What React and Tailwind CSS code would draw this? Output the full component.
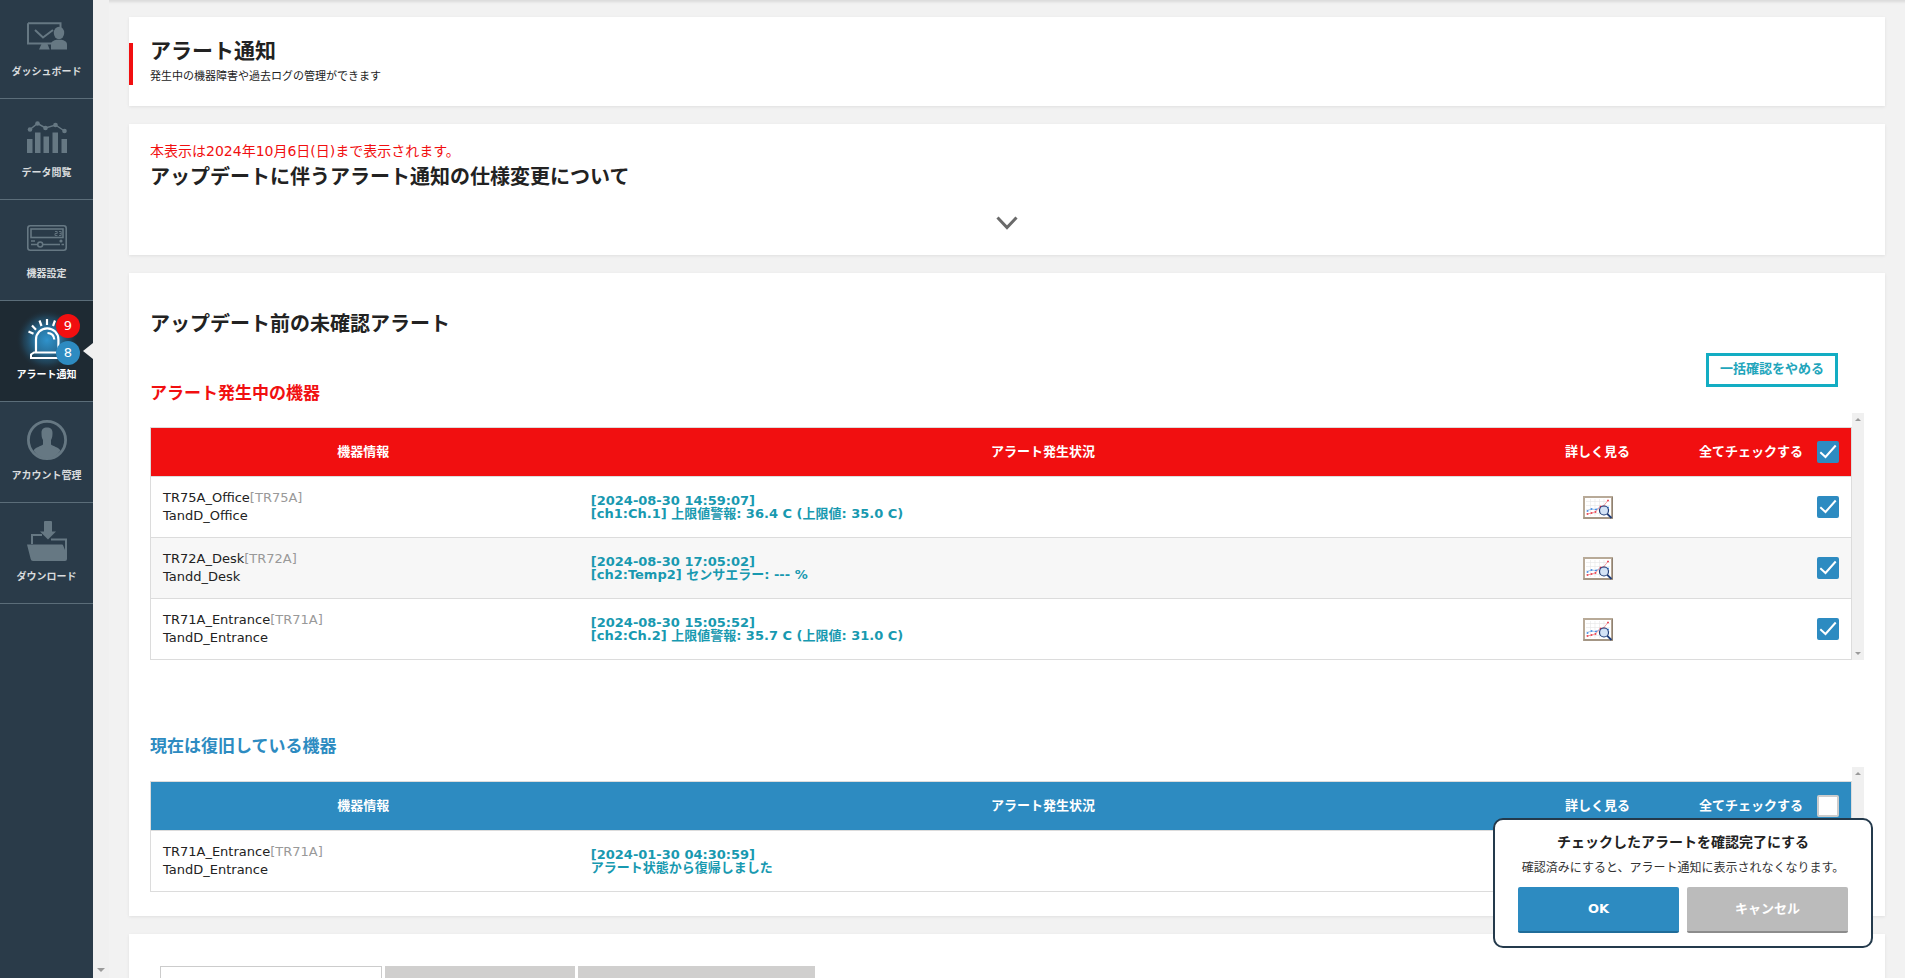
import React, { useState } from "react";

const ICON = "#667883";

function DashboardIcon() {
  return (
    <svg width="40" height="28" viewBox="0 0 40 28" fill="none" aria-hidden="true">
      <path d="M1 1.200h32.500v5M1 1.200v20.300h24" stroke={ICON} strokeWidth="2" />
      <path d="M8 8l8 7.500L26 8" stroke={ICON} strokeWidth="2" />
      <path d="M14.500 22h6l2.200 5.500H12z" fill={ICON} />
      <ellipse cx="32" cy="11" rx="5.200" ry="6.200" fill={ICON} />
      <path d="M24 27.500v-5c0-3 3-4.300 5.500-4.800h5c2.500.5 5.500 1.800 5.500 4.800v5z" fill={ICON} />
    </svg>
  );
}

function DataIcon() {
  return (
    <svg width="40" height="32" viewBox="0 0 40 32" fill={ICON} aria-hidden="true">
      <path d="M0 18h5.500v14H0zM8 11.500h5.500V32H8zM16.500 15.500H22V32h-5.500zM25.500 11.500H31V32h-5.500zM34.500 18H40v14h-5.500z" />
      <path d="M3 8.500L10.500 2.500 18.500 7 28.500 4 37.500 10" fill="none" stroke={ICON} strokeWidth="1.500" />
      <circle cx="3" cy="8.500" r="2.300" />
      <circle cx="10.500" cy="2.500" r="2.300" />
      <circle cx="18.500" cy="7" r="2.300" />
      <circle cx="28.500" cy="4" r="2.300" />
      <circle cx="37.500" cy="10" r="2.300" />
    </svg>
  );
}

function DeviceIcon() {
  return (
    <svg width="40" height="26" viewBox="0 0 40 26" fill="none" stroke={ICON} aria-hidden="true">
      <rect x=".8" y=".8" width="38.400" height="24.400" rx="2.500" strokeWidth="1.600" />
      <rect x="4" y="4" width="32" height="8.500" strokeWidth="1.600" />
      <path d="M28 6.500h2.200v2H28v2h2.400M32 6.500h2.200v4H32M32.500 8.500h1.700" strokeWidth=".9" />
      <path d="M4 16h4M4 19.500h6.500M16 19.500h17M34.500 19.500H37" strokeWidth="1.400" />
      <circle cx="13.200" cy="19.500" r="2.500" strokeWidth="1.500" />
      <circle cx="34" cy="16" r="1.600" fill={ICON} stroke="none" />
    </svg>
  );
}

function AlertIcon() {
  return (
    <svg width="40" height="40" viewBox="27 319 40 40" className="overflow-visible" fill="none" stroke="#fff" aria-hidden="true">
      <defs>
        <radialGradient id="glow">
          <stop offset="0" stopColor="#2f93cc" />
          <stop offset=".4" stopColor="#2a80b2" stopOpacity=".85" />
          <stop offset=".75" stopColor="#245f82" stopOpacity=".4" />
          <stop offset="1" stopColor="#1e2a33" stopOpacity="0" />
        </radialGradient>
      </defs>
      <circle cx="47" cy="340" r="31" fill="url(#glow)" stroke="none" />
      <path d="M28.500 331.500l5 2.300M32 325.500l4 4.200M39.500 320.500l2 5.500M47 319v6M55 320.500l-2 5.500M62 325.500l-4 4" strokeWidth="2.200" />
      <path d="M36 352v-12.500a11.200 11.200 0 0 1 22.400 0V352" strokeWidth="2.200" />
      <path d="M47.500 333c4 .2 6.500 2.500 6.800 6.500" strokeWidth="2.200" />
      <path d="M34 352.500h26.500l2.500 5.500H31v-3.500z" strokeWidth="2" />
    </svg>
  );
}

function AccountIcon() {
  return (
    <svg width="40" height="40" viewBox="0 0 40 40" aria-hidden="true">
      <circle cx="20" cy="20" r="18.600" fill="none" stroke={ICON} strokeWidth="2.800" />
      <path d="M14.500 13c0-4 2-5.500 5.500-5.500s5.500 1.500 5.500 5.500c0 3-.3 5-1.500 7v4.500c2.500 2 7 2.500 9.500 6A18 18 0 0 1 20 38.500a18 18 0 0 1-13.500-8c2.500-3.500 7-4 9.500-6V20c-1.200-2-1.500-4-1.500-7z" fill={ICON} />
    </svg>
  );
}

function DownloadIcon() {
  return (
    <svg width="40" height="40" viewBox="0 0 40 40" fill={ICON} aria-hidden="true">
      <path d="M18 0h6q1 0 1 1v9.500h4L21 18.500l-8-8h4V1q0-1 1-1z" />
      <path d="M5 23v-9h10M24 18.500h15V37" fill="none" stroke={ICON} strokeWidth="2" />
      <path d="M0 23.500h35q1 0 1.200 1L38 29h2v9q0 2-2 2H6q-2 0-2.300-2z" />
    </svg>
  );
}

function ReportIcon() {
  return (
    <svg width="30" height="23" viewBox="0 0 30 23" fill="none" aria-hidden="true">
      <rect x="1" y="1" width="28" height="21" fill="#fff" stroke="#b8aa98" strokeWidth="2" />
      <path d="M.5 22h29V1" stroke="#8f8272" strokeWidth="1.200" />
      <path d="M3 5.500h24M3 9.500h24M3 13.500h24M3 17.500h24M7.500 3v17M12 3v17M16.500 3v17M21 3v17" stroke="#e6e6e6" strokeWidth=".6" />
      <path d="M4.500 14.500l4-1.500 4 .5 5-2.500 8 .5" stroke="#8fbdf0" strokeWidth=".8" />
      <path d="M3.700 14.200h1.600v1.600H3.700zM7.700 12.200h1.600v1.600H7.700zM12.200 12.700h1.600v1.600h-1.600zM24.200 10.700h1.600v1.600h-1.600z" fill="#2f7fe0" />
      <path d="M4.500 18l4-1 4-1.200 5-5.300 3-.5L25 4.500" stroke="#f08a90" strokeWidth=".8" />
      <path d="M3.700 17.200h1.600v1.600H3.700zM7.700 16.200h1.600v1.600H7.700zM11.700 15.200h1.600v1.600h-1.600zM16.700 9.700h1.600v1.600h-1.600zM20.200 9.700h1.600v1.600h-1.600zM24.200 3.700h1.600v1.600h-1.600z" fill="#e8283a" />
      <circle cx="21" cy="14.500" r="4.500" fill="#cfe0f5" fillOpacity=".9" stroke="#1f3d78" strokeWidth="1.200" />
      <path d="M24.300 17.800l4.200 4.200" stroke="#1f3d78" strokeWidth="1.800" />
    </svg>
  );
}

const NAV = [
  { label: "ダッシュボード", Icon: DashboardIcon, height: "h-[99px]" },
  { label: "データ閲覧", Icon: DataIcon, height: "h-[101px]" },
  { label: "機器設定", Icon: DeviceIcon, height: "h-[101px]" },
  { label: "アラート通知", Icon: AlertIcon, height: "h-[101px]", active: true },
  { label: "アカウント管理", Icon: AccountIcon, height: "h-[101px]" },
  { label: "ダウンロード", Icon: DownloadIcon, height: "h-[101px]" },
];

function Sidebar() {
  return (
    <nav className="w-[93px] shrink-0 bg-[#2a3b49]">
      {NAV.map(({ label, Icon, height, active }) => (
        <a
          key={label}
          href="#"
          aria-current={active ? "page" : undefined}
          className={`relative flex flex-col items-center justify-end border-b border-[#5b6d79] pb-[19px] ${height} ${
            active ? "bg-[#1e2a33] text-white" : "text-[#d9dcde]"
          }`}
        >
          <span className="mb-[9px] flex h-10 items-center">
            <Icon />
          </span>
          <span className="relative text-[10px] leading-[14px] font-bold whitespace-nowrap">{label}</span>
          {active && (
            <>
              <span className="absolute top-[13px] left-14 size-6 rounded-full bg-[#f10f10] text-center text-[13px] leading-6 text-white">9</span>
              <span className="absolute top-10 left-14 size-6 rounded-full bg-[#2d8bc1] text-center text-[13px] leading-6 text-white">8</span>
              <svg className="absolute top-[42px] right-0" width="10" height="16" viewBox="0 0 10 16" aria-hidden="true">
                <path d="M10 0v16L0 8z" fill="#f0f0f0" />
              </svg>
            </>
          )}
        </a>
      ))}
    </nav>
  );
}

function Arrow({ down, size }) {
  return (
    <svg width={size} height={size / 2} viewBox="0 0 8 4" aria-hidden="true">
      <path d={down ? "M0 0h8L4 4z" : "M0 4h8L4 0z"} fill="#9a9a9a" />
    </svg>
  );
}

function CheckBox({ label, checked, onChange }) {
  return (
    <span className="inline-grid size-[22px] shrink-0 align-middle">
      <input
        type="checkbox"
        aria-label={label}
        checked={checked}
        onChange={onChange}
        className="col-start-1 row-start-1 size-[22px] appearance-none rounded-xs border-2 border-[#ccc] bg-white checked:border-[#2d8bc1] checked:bg-[#2d8bc1]"
      />
      {checked && (
        <svg className="pointer-events-none col-start-1 row-start-1" width="22" height="22" viewBox="0 0 22 22" fill="none" aria-hidden="true">
          <path d="M3.300 11.300L8.500 16 18.700 4.500" stroke="#fff" strokeWidth="2" />
        </svg>
      )}
    </span>
  );
}

function AlertTable({ tone, rows, initial, name }) {
  const [checks, setChecks] = useState(rows.map(() => initial));
  const all = checks.every(Boolean);
  return (
    <div className="flex">
      <div className="min-w-0 flex-1 pt-[14px]">
        <table className="w-full table-fixed border-collapse border border-[#dcdcdc] text-[13px]">
          <colgroup>
            <col className="w-[25%]" />
            <col />
            <col className="w-[174px]" />
            <col className="w-[167px]" />
          </colgroup>
          <thead>
            <tr className={`h-[49px] text-white ${tone}`}>
              <th className="font-bold">機器情報</th>
              <th className="font-bold">アラート発生状況</th>
              <th className="font-bold">詳しく見る</th>
              <th className="pr-3 font-bold">
                <div className="flex items-center justify-end gap-[14px]">
                  <span className="whitespace-nowrap">全てチェックする</span>
                  <CheckBox label={`${name} 全てチェックする`} checked={all} onChange={() => setChecks(rows.map(() => !all))} />
                </div>
              </th>
            </tr>
          </thead>
          <tbody>
            {rows.map((r, i) => (
              <tr key={r.device} className="h-[61px] border-t border-[#dcdcdc] even:bg-[#f7f7f7]">
                <td className="pl-3 leading-[18px] text-[#222]">
                  {r.device}
                  <span className="text-[#999]">[{r.model}]</span>
                  <br />
                  {r.group}
                </td>
                <td className="pl-[15px] leading-[13px] font-bold text-[#1899b0]">
                  [{r.time}]
                  <br />
                  {r.message}
                </td>
                <td>
                  <a href="#" aria-label={`${r.device} 詳しく見る`} className="flex justify-center">
                    <ReportIcon />
                  </a>
                </td>
                <td className="pr-3 text-right">
                  <CheckBox
                    label={r.device}
                    checked={checks[i]}
                    onChange={() => setChecks(checks.map((c, j) => (j === i ? !c : c)))}
                  />
                </td>
              </tr>
            ))}
          </tbody>
        </table>
      </div>
      <div className="flex w-3 shrink-0 flex-col items-center justify-between bg-[#f0f0f0] py-[5px]">
        <Arrow size={6} />
        <Arrow size={6} down />
      </div>
    </div>
  );
}

const ACTIVE = [
  { device: "TR75A_Office", model: "TR75A", group: "TandD_Office", time: "2024-08-30 14:59:07", message: "[ch1:Ch.1] 上限値警報: 36.4 C (上限値: 35.0 C)" },
  { device: "TR72A_Desk", model: "TR72A", group: "Tandd_Desk", time: "2024-08-30 17:05:02", message: "[ch2:Temp2] センサエラー: --- %" },
  { device: "TR71A_Entrance", model: "TR71A", group: "TandD_Entrance", time: "2024-08-30 15:05:52", message: "[ch2:Ch.2] 上限値警報: 35.7 C (上限値: 31.0 C)" },
];

const RECOVERED = [
  { device: "TR71A_Entrance", model: "TR71A", group: "TandD_Entrance", time: "2024-01-30 04:30:59", message: "アラート状態から復帰しました" },
];

function Card({ className, children }) {
  return <section className={`bg-white shadow-[0_1px_3px_rgba(0,0,0,0.08)] ${className}`}>{children}</section>;
}

export default function App() {
  return (
    <div lang="ja" className="flex h-screen overflow-hidden bg-[#f2f2f2] font-['DejaVu_Sans','Noto_Sans_CJK_JP',sans-serif] text-[#222]">
      <Sidebar />
      <div className="flex w-4 shrink-0 flex-col items-center justify-end bg-[#f0f0f0] pb-[6px]">
        <Arrow size={8} down />
      </div>
      <main className="flex min-w-0 flex-1 flex-col gap-[18px] overflow-hidden px-5 pt-[17px] shadow-[inset_0_5px_3px_-3px_rgba(0,0,0,0.1)]">
        <Card className="flex shrink-0 gap-[17px]">
          <div className="mt-[26px] h-[42px] w-1 bg-[#f10f10]" />
          <div className="pt-5 pb-[21px]">
            <h1 className="text-[21px] leading-7 font-bold">アラート通知</h1>
            <p className="mt-1 text-[11px] leading-4">発生中の機器障害や過去ログの管理ができます</p>
          </div>
        </Card>

        <Card className="shrink-0 px-[21px] pt-[18px] pb-[25px]">
          <p className="text-[14px] leading-[18px] text-[#f10f10]">本表示は2024年10月6日(日)まで表示されます。</p>
          <h2 className="mt-[3px] text-xl leading-7 font-bold">アップデートに伴うアラート通知の仕様変更について</h2>
          <button type="button" aria-label="詳細を開く" className="mx-auto mt-[25px] block">
            <svg width="22" height="14" viewBox="0 0 22 14" fill="none" aria-hidden="true">
              <path d="M1.500 1.500L11 11.500l9.500-10" stroke="#6a6a6a" strokeWidth="3" />
            </svg>
          </button>
        </Card>

        <Card className="shrink-0 px-[21px] pt-[37px] pb-6">
          <h2 className="text-xl leading-7 font-bold">アップデート前の未確認アラート</h2>
          <div className="mt-[15px] flex h-[52px] justify-between">
            <h3 className="self-end text-[17px] leading-6 font-bold text-[#f10f10]">アラート発生中の機器</h3>
            <button type="button" className="mr-[26px] h-[34px] self-start border-3 border-[#13adc3] px-[11px] pb-[2px] text-[13px] font-bold text-[#22a5bb]">
              一括確認をやめる
            </button>
          </div>
          <div className="mt-2">
            <AlertTable tone="bg-[#f10f10]" rows={ACTIVE} initial={true} name="アラート発生中の機器" />
          </div>
          <h3 className="mt-[74px] mb-[9px] text-[17px] leading-6 font-bold text-[#2d8bc1]">現在は復旧している機器</h3>
          <AlertTable tone="bg-[#2d8bc1]" rows={RECOVERED} initial={false} name="現在は復旧している機器" />
        </Card>

        <Card className="flex shrink-0 gap-[3px] px-[31px] pt-8">
          <div className="h-24 w-[222px] border border-b-0 border-[#ccc]" />
          <div className="h-24 w-[190px] bg-[#d0cfce]" />
          <div className="h-24 w-[237px] bg-[#d0cfce]" />
        </Card>
      </main>

      <div role="dialog" aria-labelledby="confirm-title" className="fixed right-8 bottom-[30px] w-[380px] rounded-[10px] border-2 border-[#243a4c] bg-white px-[23px] pt-3 pb-[13px] text-center">
        <h4 id="confirm-title" className="text-[14px] leading-5 font-bold">チェックしたアラートを確認完了にする</h4>
        <p className="mt-[6px] text-[12px] leading-5 whitespace-nowrap text-[#333]">確認済みにすると、アラート通知に表示されなくなります。</p>
        <div className="mt-[9px] flex gap-2">
          <button type="button" className="h-[46px] flex-1 rounded-xs border-b-2 border-[#1f6c99] bg-[#2d8bc1] text-[13px] font-bold text-white">OK</button>
          <button type="button" className="h-[46px] flex-1 rounded-xs border-b-2 border-[#8c8c8c] bg-[#bbb] text-[13px] font-bold text-white">キャンセル</button>
        </div>
      </div>
    </div>
  );
}
